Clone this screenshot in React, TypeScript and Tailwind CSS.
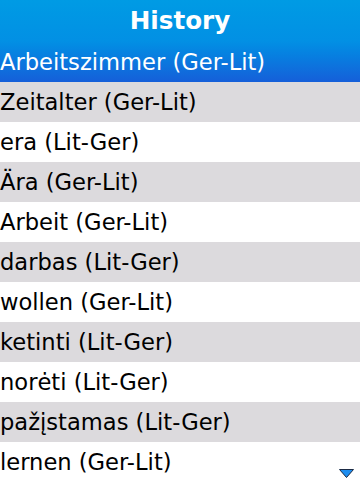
import React from 'react';

const items = [
  'Zeitalter (Ger-Lit)',
  'era (Lit-Ger)',
  'Ära (Ger-Lit)',
  'Arbeit (Ger-Lit)',
  'darbas (Lit-Ger)',
  'wollen (Ger-Lit)',
  'ketinti (Lit-Ger)',
  'norėti (Lit-Ger)',
  'pažįstamas (Lit-Ger)',
  'lernen (Ger-Lit)',
];

export default function App() {
  return (
    <div
      className="relative w-[360px] h-[480px] overflow-hidden bg-white text-black"
      style={{ fontFamily: '"DejaVu Sans", sans-serif' }}
    >
      {/* Title + selected row share one gradient */}
      <div className="bg-gradient-to-b from-[#009be4] via-[#0290e4] to-[#155fd9] text-white">
        <div className="h-[42px] flex items-center justify-center text-[24.6px] font-bold leading-none">
          History
        </div>
        <div className="h-[40px] flex items-center text-[22.6px] leading-none">
          Arbeitszimmer (Ger-Lit)
        </div>
      </div>

      {items.map((text, i) => (
        <div
          key={text}
          className={`h-[40px] flex items-center text-[22.6px] leading-none ${
            i % 2 === 0 ? 'bg-[#dcdadd]' : 'bg-white'
          }`}
        >
          {text}
        </div>
      ))}

      {/* scroll-down indicator */}
      <svg
        className="absolute right-[6px] bottom-[2px]"
        width="15"
        height="9"
        viewBox="0 0 15 9"
      >
        <polygon points="0.5,0.5 14.5,0.5 7.5,8.5" fill="#1e8ef0" stroke="#1b2a44" strokeWidth="1" />
      </svg>
    </div>
  );
}
